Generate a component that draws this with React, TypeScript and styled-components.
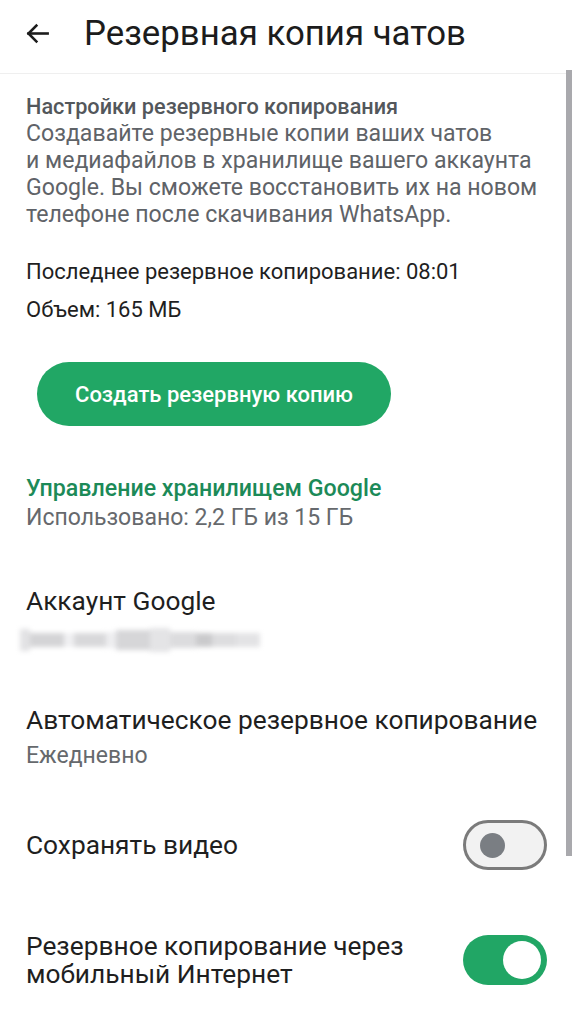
import React from 'react'
import styled, { createGlobalStyle } from 'styled-components'

const GlobalStyle = createGlobalStyle`
  html, body {
    margin: 0;
    padding: 0;
    background: #ffffff;
  }
  body {
    font-family: Roboto, 'Noto Sans', 'Liberation Sans', sans-serif;
    -webkit-font-smoothing: antialiased;
  }
`

const Page = styled.div`
  width: 572px;
  min-height: 1024px;
  background: #fff;
  position: relative;
  overflow: hidden;
`

const Header = styled.header`
  height: 66px;
  padding-bottom: 7px;
  display: flex;
  align-items: center;
  border-bottom: 1px solid #efefef;
`

const BackButton = styled.div`
  width: 84px;
  height: 66px;
  display: flex;
  align-items: center;
  padding-left: 24px;
  box-sizing: border-box;
`

const Title = styled.h1`
  margin: 0;
  font-size: 34.8px;
  font-weight: 400;
  color: #1c1c1c;
`

const Section = styled.section<{ $top?: number }>`
  padding: ${p => p.$top ?? 0}px 26px 0 26px;
`

const SectionTitle = styled.div`
  font-size: 21.7px;
  font-weight: 500;
  line-height: 27px;
  color: #53575b;
`

const Description = styled.p`
  margin: 0;
  font-size: 23.1px;
  line-height: 27px;
  color: #5f6368;
`

const InfoLine = styled.div`
  font-size: 22px;
  line-height: 38px;
  color: #1f1f1f;
`

const PrimaryButton = styled.button`
  display: block;
  margin: 33px 0 0 11px;
  width: 354px;
  height: 64px;
  border: none;
  border-radius: 32px;
  background: #21a765;
  color: #fff;
  font-family: inherit;
  font-size: 22px;
  font-weight: 500;
  padding: 0;
`

const LinkTitle = styled.div`
  font-size: 23.2px;
  font-weight: 500;
  line-height: 30px;
  color: #1c8a58;
`

const Muted = styled.div<{ $lh?: number }>`
  font-size: 23px;
  line-height: ${p => p.$lh ?? 30}px;
  color: #66696d;
`

const Row = styled.div<{ $top: number }>`
  display: flex;
  align-items: center;
  justify-content: space-between;
  padding: ${p => p.$top}px 26px 0 26px;
`

const RowText = styled.div`
  display: flex;
  flex-direction: column;
`

const Label = styled.div<{ $lh?: number }>`
  font-size: 26.3px;
  line-height: ${p => p.$lh ?? 32}px;
  color: #1f1f1f;
`

const Blurred = styled.div`
  display: flex;
  align-items: center;
  height: 24px;
  margin: 11px 0 0 -6px;
  filter: blur(2.4px);
`

const BlurBlock = styled.span<{ $w: number; $shade: string; $h: number }>`
  display: block;
  width: ${p => p.$w}px;
  height: ${p => p.$h}px;
  background: ${p => p.$shade};
`

const Switch = styled.div<{ $on: boolean }>`
  width: 84px;
  height: 50px;
  box-sizing: border-box;
  border-radius: 25px;
  display: flex;
  align-items: center;
  flex-shrink: 0;
  margin-right: -1px;
  justify-content: ${p => (p.$on ? 'flex-end' : 'flex-start')};
  padding: ${p => (p.$on ? '0 6px' : '0 14px')};
  background: ${p => (p.$on ? '#21a665' : '#f2f2f2')};
  border: ${p => (p.$on ? 'none' : '3px solid #7b7b7b')};
`

const Thumb = styled.span<{ $on: boolean }>`
  display: block;
  width: ${p => (p.$on ? 38 : 25)}px;
  height: ${p => (p.$on ? 38 : 25)}px;
  border-radius: 50%;
  background: ${p => (p.$on ? '#ffffff' : '#7a7e83')};
`

const ScrollBar = styled.div`
  position: absolute;
  right: 0;
  top: 70px;
  width: 6px;
  height: 786px;
  background: #a9a9ad;
`

const emailBlocks: { w: number; shade: string; h: number }[] = [
  { w: 10, shade: '#e2e2e4', h: 22 },
  { w: 34, shade: '#d4d4d6', h: 14 },
  { w: 10, shade: '#f0f0f2', h: 14 },
  { w: 32, shade: '#d8d8da', h: 14 },
  { w: 10, shade: '#eeeef0', h: 16 },
  { w: 34, shade: '#d6d6d8', h: 20 },
  { w: 20, shade: '#e4e4e6', h: 24 },
  { w: 26, shade: '#dcdcde', h: 16 },
  { w: 16, shade: '#cacacc', h: 14 },
  { w: 24, shade: '#dddddf', h: 14 },
  { w: 24, shade: '#e3e3e5', h: 14 },
]

export default function App() {
  return (
    <Page>
      <GlobalStyle />
      <Header>
        <BackButton>
          <svg width="27" height="27" viewBox="0 0 24 24" fill="none" stroke="#1c1c1c" strokeWidth="2.3" strokeLinecap="square">
            <path d="M21 12H4" />
            <path d="M11 5l-7 7 7 7" />
          </svg>
        </BackButton>
        <Title>Резервная копия чатов</Title>
      </Header>

      <Section $top={19}>
        <SectionTitle>Настройки резервного копирования</SectionTitle>
        <Description>
          Создавайте резервные копии ваших чатов
          <br />и медиафайлов в хранилище вашего аккаунта
          <br />Google. Вы сможете восстановить их на новом
          <br />телефоне после скачивания WhatsApp.
        </Description>
      </Section>

      <Section $top={25}>
        <InfoLine>Последнее резервное копирование: 08:01</InfoLine>
        <InfoLine>Объем: 165 МБ</InfoLine>
        <PrimaryButton>Создать резервную копию</PrimaryButton>
      </Section>

      <Section $top={47}>
        <LinkTitle>Управление хранилищем Google</LinkTitle>
        <Muted>Использовано: 2,2 ГБ из 15 ГБ</Muted>
      </Section>

      <Row $top={52}>
        <RowText>
          <Label>Аккаунт Google</Label>
          <Blurred>
            {emailBlocks.map((b, i) => (
              <BlurBlock key={i} $w={b.w} $shade={b.shade} $h={b.h} />
            ))}
          </Blurred>
        </RowText>
      </Row>

      <Row $top={52}>
        <RowText>
          <Label>Автоматическое резервное копирование</Label>
          <Muted $lh={40}>Ежедневно</Muted>
        </RowText>
      </Row>

      <Row $top={44}>
        <Label>Сохранять видео</Label>
        <Switch $on={false}>
          <Thumb $on={false} />
        </Switch>
      </Row>

      <Row $top={62}>
        <Label $lh={28}>
          Резервное копирование через
          <br />мобильный Интернет
        </Label>
        <Switch $on>
          <Thumb $on />
        </Switch>
      </Row>

      <ScrollBar />
    </Page>
  )
}
